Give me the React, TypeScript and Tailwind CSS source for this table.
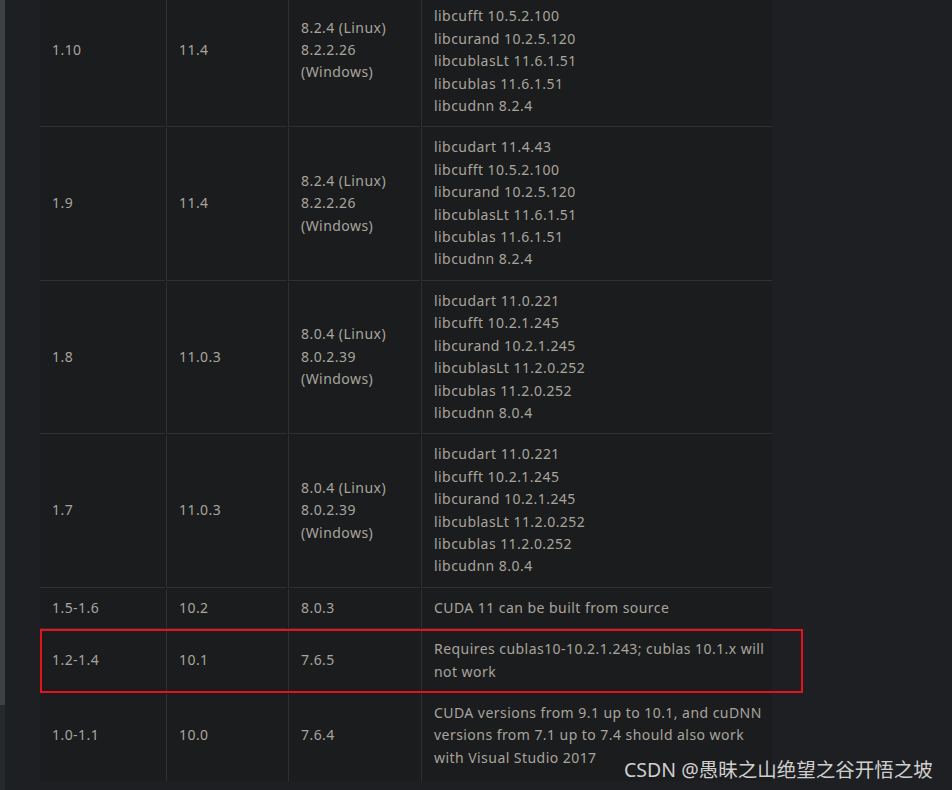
type Row = {
  torch: string;
  cuda: string;
  cudnn: string[];
  libs: string[];
};

const ROWS: Row[] = [
  {
    torch: '1.10',
    cuda: '11.4',
    cudnn: ['8.2.4 (Linux)', '8.2.2.26', '(Windows)'],
    libs: [
      'libcudart 11.4.43',
      'libcufft 10.5.2.100',
      'libcurand 10.2.5.120',
      'libcublasLt 11.6.1.51',
      'libcublas 11.6.1.51',
      'libcudnn 8.2.4',
    ],
  },
  {
    torch: '1.9',
    cuda: '11.4',
    cudnn: ['8.2.4 (Linux)', '8.2.2.26', '(Windows)'],
    libs: [
      'libcudart 11.4.43',
      'libcufft 10.5.2.100',
      'libcurand 10.2.5.120',
      'libcublasLt 11.6.1.51',
      'libcublas 11.6.1.51',
      'libcudnn 8.2.4',
    ],
  },
  {
    torch: '1.8',
    cuda: '11.0.3',
    cudnn: ['8.0.4 (Linux)', '8.0.2.39', '(Windows)'],
    libs: [
      'libcudart 11.0.221',
      'libcufft 10.2.1.245',
      'libcurand 10.2.1.245',
      'libcublasLt 11.2.0.252',
      'libcublas 11.2.0.252',
      'libcudnn 8.0.4',
    ],
  },
  {
    torch: '1.7',
    cuda: '11.0.3',
    cudnn: ['8.0.4 (Linux)', '8.0.2.39', '(Windows)'],
    libs: [
      'libcudart 11.0.221',
      'libcufft 10.2.1.245',
      'libcurand 10.2.1.245',
      'libcublasLt 11.2.0.252',
      'libcublas 11.2.0.252',
      'libcudnn 8.0.4',
    ],
  },
  {
    torch: '1.5-1.6',
    cuda: '10.2',
    cudnn: ['8.0.3'],
    libs: ['CUDA 11 can be built from source'],
  },
  {
    torch: '1.2-1.4',
    cuda: '10.1',
    cudnn: ['7.6.5'],
    libs: ['Requires cublas10-10.2.1.243; cublas 10.1.x will', 'not work'],
  },
  {
    torch: '1.0-1.1',
    cuda: '10.0',
    cudnn: ['7.6.4'],
    libs: [
      'CUDA versions from 9.1 up to 10.1, and cuDNN',
      'versions from 7.1 up to 7.4 should also work',
      'with Visual Studio 2017',
    ],
  },
];

function Cell({ lines, first, last }: { lines: string[]; first?: boolean; last?: boolean }) {
  return (
    <div
      className={`flex flex-col justify-center px-3 pt-[8px] ${first ? '' : 'border-l border-[#2e3032]'} ${
        last ? 'pb-[12px]' : 'pb-[9px] border-b border-[#2e3032]'
      }`}
    >
      {lines.map((l, i) => (
        <div key={i} className="whitespace-nowrap">
          {l}
        </div>
      ))}
    </div>
  );
}

export default function App() {
  return (
    <div
      className="relative flex h-[790px] w-[952px] overflow-hidden bg-[#1e1f22] text-[14px] leading-[22.4px] tracking-[0.45px] text-[#a9a49c]"
      style={{ fontFamily: '"Noto Sans", "Liberation Sans", sans-serif' }}
    >
      {/* scrollbar strip */}
      <div className="flex w-[5px] flex-col">
        <div className="h-[705px] bg-[#3d4144]" />
        <div className="flex-1 bg-[#26292b]" />
      </div>

      <div className="pl-[35px]">
        <div className="mt-[-25px] flex w-[732px] flex-col gap-y-[1px] bg-[#1b1c1e]">
          {ROWS.map((r, i) => {
            const last = i === ROWS.length - 1;
            return (
              <div key={r.torch} className="grid grid-cols-[125px_121px_132px_351px] gap-x-[1px]">
                <Cell lines={[r.torch]} first last={last} />
                <Cell lines={[r.cuda]} last={last} />
                <Cell lines={r.cudnn} last={last} />
                <Cell lines={r.libs} last={last} />
              </div>
            );
          })}
        </div>
      </div>

      {/* highlight box */}
      <div className="absolute left-[40px] top-[629px] h-[64px] w-[763px] border-2 border-[#e3141f]" />

      {/* watermark */}
      <div
        className="absolute left-[624px] top-[757px] text-[19.5px] leading-[26px] tracking-normal text-[#cfcfcf]"
        style={{ fontFamily: '"Noto Sans", "Noto Sans CJK SC", sans-serif' }}
      >
        CSDN @愚昧之山绝望之谷开悟之坡
      </div>
    </div>
  );
}
